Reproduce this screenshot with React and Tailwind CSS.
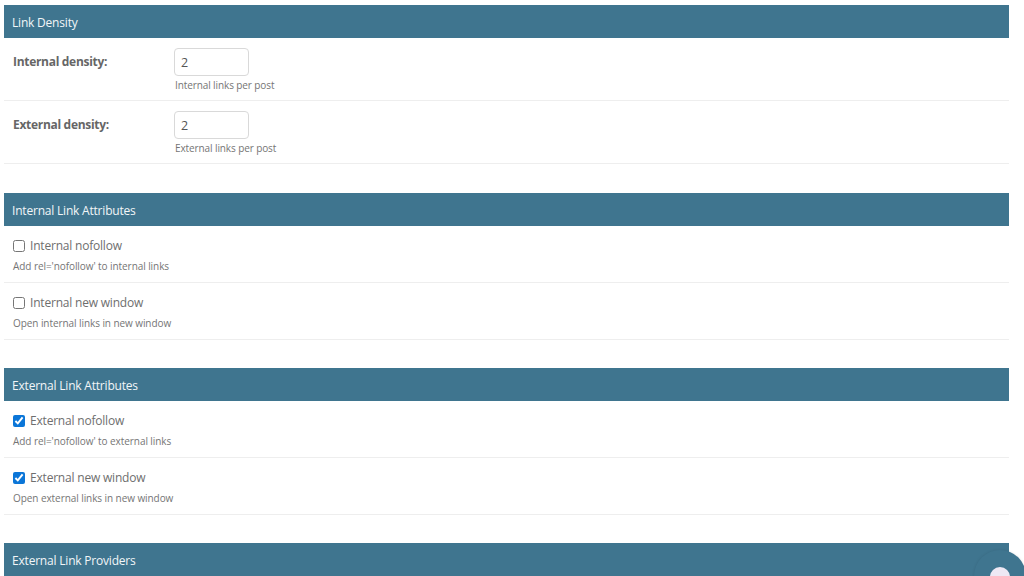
import React from 'react';

const font = "font-['Open_Sans',sans-serif]";

const SectionHeader = ({ title }) => (
  <div className="flex h-[33px] items-center bg-[#3f758f] pl-[8px] pt-[2px] text-[12px] tracking-[-0.2px] text-[#f2f6f8]">
    {title}
  </div>
);

const DensityRow = ({ label, hint }) => (
  <div className="flex h-[63px] border-b border-[#eeeeee]">
    <div className="w-[170px] pl-[9px] pt-[14px] text-[12px] leading-[20px] font-bold tracking-[-0.3px] text-[#666666]">{label}</div>
    <div className="pt-[10px]">
      <input
        type="text"
        readOnly
        value="2"
        className="block h-[28px] w-[75px] rounded-[4px] border border-[#d9d9d9] bg-white pl-[6px] text-[12.5px] text-[#555555]"
      />
      <p className="mt-[1px] pl-[1px] text-[10px] leading-[16px] tracking-[-0.1px] text-[#757575]">{hint}</p>
    </div>
  </div>
);

const CheckRow = ({ label, hint, checked }) => (
  <div className="flex h-[57px] flex-col border-b border-[#eeeeee] pl-[9px] pt-[10px]">
    <label className="flex h-[20px] items-center">
      <input type="checkbox" readOnly checked={checked} className="h-[12px] w-[12px] accent-[#0b76d8]" />
      <span className="ml-[5px] text-[12px] tracking-[-0.2px] text-[#6e6e6e]">{label}</span>
    </label>
    <p className="mt-[2px] text-[10px] leading-[16px] tracking-[-0.07px] text-[#757575]">{hint}</p>
  </div>
);

const internalRows = [
  { label: 'Internal nofollow', hint: "Add rel='nofollow' to internal links", checked: false },
  { label: 'Internal new window', hint: 'Open internal links in new window', checked: false }
];

const externalRows = [
  { label: 'External nofollow', hint: "Add rel='nofollow' to external links", checked: true },
  { label: 'External new window', hint: 'Open external links in new window', checked: true }
];

export default function App() {
  return (
    <div className={`relative h-[576px] w-[1024px] overflow-hidden bg-white pl-[4px] pr-[15px] pt-[5px] ${font}`}>
      {/* Link density */}
      <SectionHeader title="Link Density" />
      <DensityRow label="Internal density:" hint="Internal links per post" />
      <DensityRow label="External density:" hint="External links per post" />

      {/* Internal attributes */}
      <div className="mt-[29px]">
        <SectionHeader title="Internal Link Attributes" />
        {internalRows.map((row) => (
          <CheckRow key={row.label} {...row} />
        ))}
      </div>

      {/* External attributes */}
      <div className="mt-[28px]">
        <SectionHeader title="External Link Attributes" />
        {externalRows.map((row) => (
          <CheckRow key={row.label} {...row} />
        ))}
      </div>

      <div className="mt-[28px]">
        <SectionHeader title="External Link Providers" />
      </div>

      {/* Floating button */}
      <div className="absolute left-[974px] top-[550px] flex h-[52px] w-[52px] justify-center rounded-full bg-[#3f758f] pt-[17px] shadow-[0_0_3px_rgba(0,0,0,0.1)]">
        <div className="h-[20px] w-[20px] rounded-full bg-[#eee8f4]" />
      </div>
    </div>
  );
}
